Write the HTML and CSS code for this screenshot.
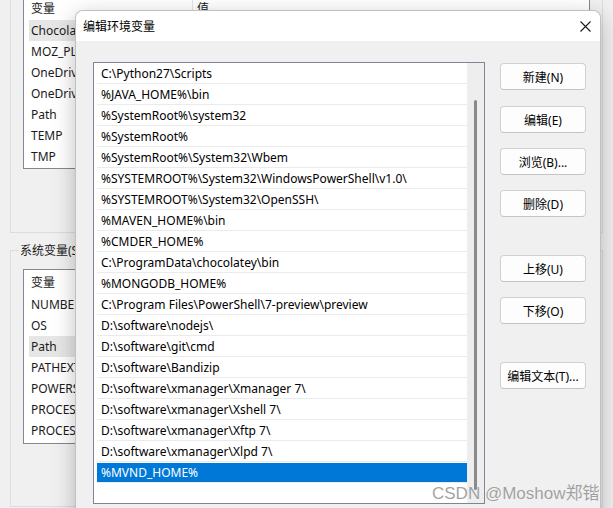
FILE: index.html
```html
<!DOCTYPE html>
<html lang="zh-CN">
<head>
<meta charset="utf-8">
<title>编辑环境变量</title>
<link rel="stylesheet" href="styles.css">
</head>
<body>
<div class="desk">
  <div class="bgwin">
    <div class="group g1">
      <div class="vlist l1">
        <div class="vhead"><span class="c1">变量</span><span class="c2">值</span></div>
        <div class="vrow hl">ChocolateyLastPathUpdate</div>
        <div class="vrow">MOZ_PLUGIN_PATH</div>
        <div class="vrow">OneDrive</div>
        <div class="vrow">OneDriveConsumer</div>
        <div class="vrow">Path</div>
        <div class="vrow">TEMP</div>
        <div class="vrow">TMP</div>
      </div>
    </div>
    <div class="group g2">
      <div class="legend">系统变量(S)</div>
      <div class="vlist l2">
        <div class="vhead"><span class="c1">变量</span><span class="c2">值</span></div>
        <div class="vrow">NUMBER_OF_PROCESSORS</div>
        <div class="vrow">OS</div>
        <div class="vrow hl">Path</div>
        <div class="vrow">PATHEXT</div>
        <div class="vrow">POWERSHELL_DISTRIBUTION_CHANNEL</div>
        <div class="vrow">PROCESSOR_ARCHITECTURE</div>
        <div class="vrow">PROCESSOR_IDENTIFIER</div>
      </div>
    </div>
  </div>

  <div class="dialog">
    <div class="titlebar">
      <span class="title">编辑环境变量</span>
      <svg class="close" width="11" height="11" viewBox="0 0 11 11"><path d="M0.5 0.5 L10.5 10.5 M10.5 0.5 L0.5 10.5" stroke="#1a1a1a" stroke-width="1.1" fill="none"/></svg>
    </div>
    <div class="dbody">
      <div class="plist">
        <div class="rows">
          <div class="prow">C:\Python27\Scripts</div>
          <div class="prow">%JAVA_HOME%\bin</div>
          <div class="prow">%SystemRoot%\system32</div>
          <div class="prow">%SystemRoot%</div>
          <div class="prow">%SystemRoot%\System32\Wbem</div>
          <div class="prow">%SYSTEMROOT%\System32\WindowsPowerShell\v1.0\</div>
          <div class="prow">%SYSTEMROOT%\System32\OpenSSH\</div>
          <div class="prow">%MAVEN_HOME%\bin</div>
          <div class="prow">%CMDER_HOME%</div>
          <div class="prow">C:\ProgramData\chocolatey\bin</div>
          <div class="prow">%MONGODB_HOME%</div>
          <div class="prow">C:\Program Files\PowerShell\7-preview\preview</div>
          <div class="prow">D:\software\nodejs\</div>
          <div class="prow">D:\software\git\cmd</div>
          <div class="prow">D:\software\Bandizip</div>
          <div class="prow">D:\software\xmanager\Xmanager 7\</div>
          <div class="prow">D:\software\xmanager\Xshell 7\</div>
          <div class="prow">D:\software\xmanager\Xftp 7\</div>
          <div class="prow">D:\software\xmanager\Xlpd 7\</div>
          <div class="prow sel">%MVND_HOME%</div>
        </div>
        <div class="sbar"><div class="thumb"></div></div>
      </div>
      <div class="btns">
        <button class="btn b-new">新建(N)</button>
        <button class="btn">编辑(E)</button>
        <button class="btn">浏览(B)...</button>
        <button class="btn b-del">删除(D)</button>
        <button class="btn">上移(U)</button>
        <button class="btn b-down">下移(O)</button>
        <button class="btn">编辑文本(T)...</button>
      </div>
    </div>
  </div>

  <div class="watermark">CSDN @Moshow郑锴</div>
</div>
</body>
</html>
```
FILE: styles.css
```css
* { box-sizing: border-box; }
html, body {
  margin: 0;
  padding: 0;
}
body {
  width: 613px;
  height: 508px;
  overflow: hidden;
  background: #f0f0f0;
  font-family: "Noto Sans", "Noto Sans CJK SC", sans-serif;
  font-size: 12px;
  color: #1a1a1a;
}
.desk {
  position: relative;
  width: 613px;
  height: 508px;
  overflow: hidden;
}

/* background window */
.bgwin {
  padding: 0 10px 0 10px;
}
.group {
  border-left: 1px solid #dcdcdc;
  border-right: 1px solid #dcdcdc;
  border-bottom: 1px solid #dcdcdc;
  padding: 0 12px;
}
.g1 {
  margin-top: -5px;
  padding-bottom: 63px;
}
.g2 {
  margin-top: 17px;
  border-top: 1px solid #dcdcdc;
  padding-bottom: 62px;
}
.legend {
  width: fit-content;
  height: 17px;
  line-height: 17px;
  margin: -9px 0 0 -4px;
  padding: 0 1px;
  background: #f0f0f0;
}
.vlist {
  background: #fff;
  border: 1px solid #828790;
  padding-bottom: 1px;
}
.l2 {
  margin-top: 10px;
  padding-bottom: 2px;
}
.vhead {
  display: flex;
  height: 24px;
  line-height: 23px;
  padding-top: 1px;
}
.vhead .c1 {
  width: 169px;
  padding-left: 7px;
  border-right: 1px solid #e5e5e5;
}
.vhead .c2 {
  padding-left: 4px;
}
.vrow {
  height: 21px;
  line-height: 20px;
  padding-top: 1px;
  margin-left: 5px;
  padding-left: 2px;
  white-space: nowrap;
}
.vrow.hl {
  background: #e6e6e6;
}

/* dialog */
.dialog {
  position: absolute;
  left: 75px;
  top: 10px;
  width: 526px;
  height: 530px;
  background: #f0f0f0;
  border: 1px solid rgba(0, 0, 0, 0.2);
  border-radius: 8px;
  box-shadow: 0 6px 22px rgba(0, 0, 0, 0.25);
  overflow: hidden;
}
.titlebar {
  height: 30px;
  background: #fff;
  display: flex;
  align-items: center;
  justify-content: space-between;
  padding: 0 9px 0 7px;
}
.title {
  font-size: 12px;
  color: #000;
}
.close {
  display: block;
}
.dbody {
  display: flex;
  align-items: flex-start;
  gap: 15px;
  padding: 21px 0 0 17px;
}
.plist {
  width: 392px;
  height: 442px;
  border: 1px solid #7f8593;
  background: #fff;
  display: flex;
}
.rows {
  width: 373px;
  padding-left: 3px;
}
.prow {
  height: 21px;
  line-height: 20px;
  padding-top: 1px;
  border-bottom: 1px solid #ebebeb;
  padding-left: 4px;
  white-space: nowrap;
  overflow: hidden;
  color: #000;
}
.prow.sel {
  background: #0078d7;
  color: #fff;
  border-top: 1px solid #fff;
  padding-top: 0;
}
.sbar {
  width: 17px;
  background: #eeeeee;
}
.thumb {
  width: 3px;
  height: 390px;
  margin: 37px 0 0 7px;
  background: #8a8a8a;
  border-radius: 2px;
}
.btns {
  display: flex;
  flex-direction: column;
  padding-top: 1px;
}
.btn {
  width: 86px;
  height: 27px;
  border: 1px solid #d0d0d0;
  border-bottom-color: #c4c4c4;
  border-radius: 4px;
  background: #fdfdfd;
  font-family: "Noto Sans", "Noto Sans CJK SC", sans-serif;
  font-size: 12px;
  color: #000;
  padding: 0;
  margin-bottom: 15px;
}
.b-new { margin-bottom: 16px; }
.b-del { margin-bottom: 38px; }
.b-down { margin-bottom: 38px; }

.watermark {
  position: absolute;
  left: 432px;
  top: 479px;
  font-family: "Liberation Sans", "Noto Sans CJK SC", sans-serif;
  font-size: 17px;
  color: rgba(125, 125, 125, 0.72);
  text-shadow: 0 0 1px rgba(255, 255, 255, 0.6);
  white-space: nowrap;
}
```
